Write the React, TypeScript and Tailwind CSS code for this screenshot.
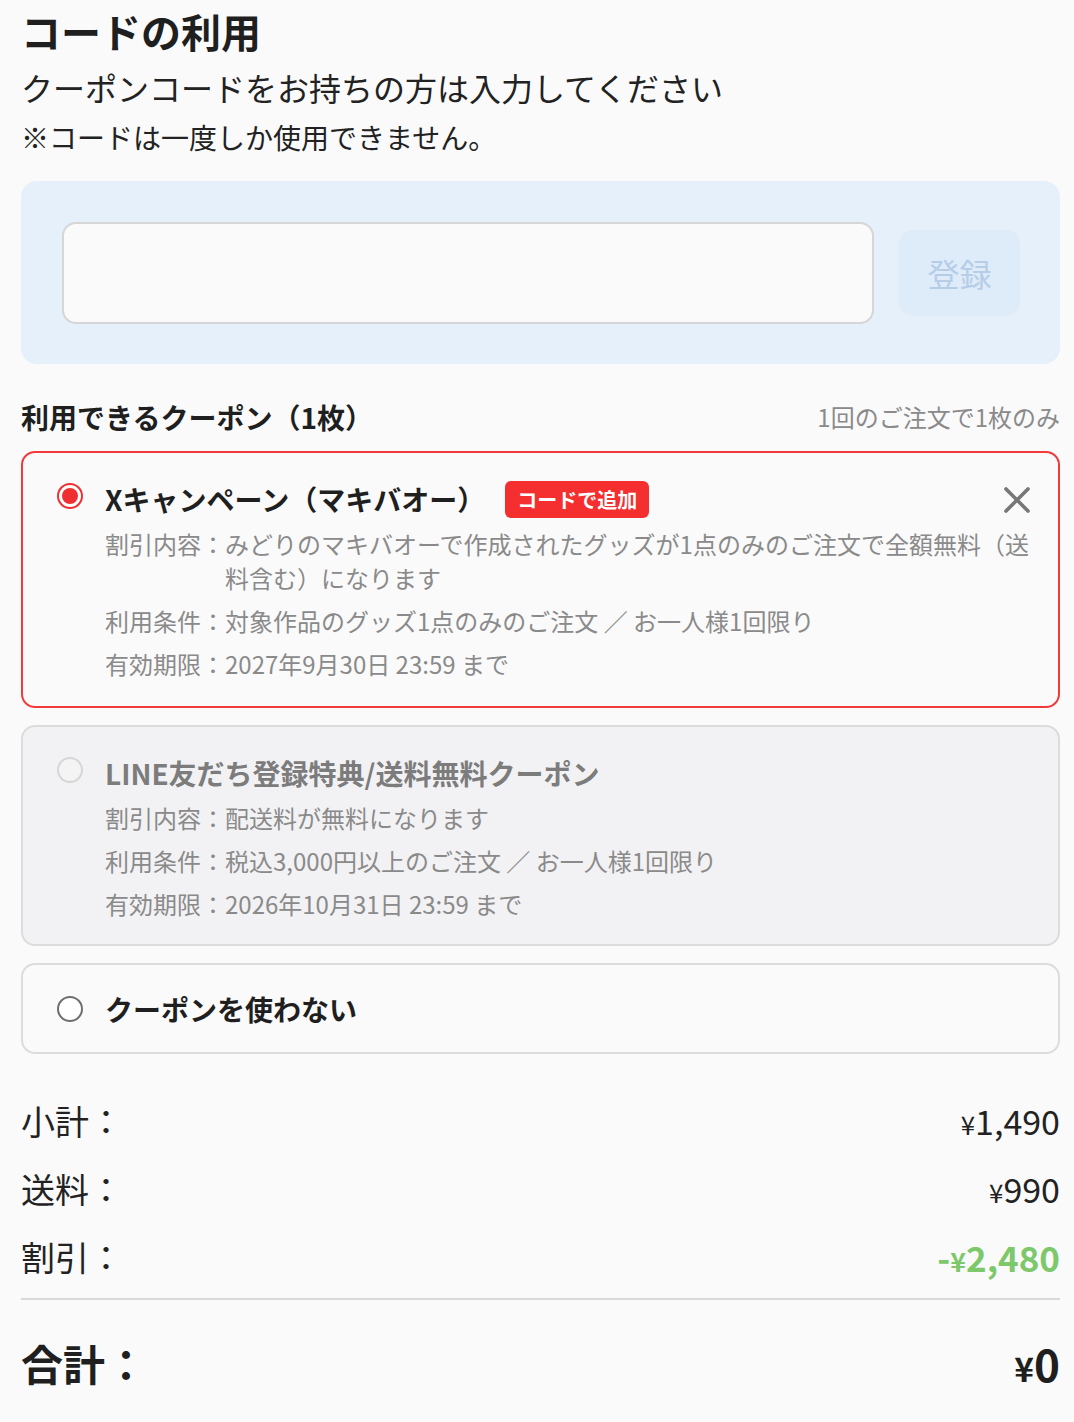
import { X } from 'lucide-react';

const FONT = "font-['Noto_Sans_CJK_JP','Noto_Sans',sans-serif]";

type Coupon = {
  title: string;
  discount: string;
  condition: string;
  expiry: string;
};

function Radio({ state }: { state: 'checked' | 'disabled' | 'empty' }) {
  if (state === 'checked') {
    return (
      <span className="mt-[3px] flex h-[26px] w-[26px] shrink-0 items-center justify-center rounded-full border-2 border-[#f03030] bg-white">
        <span className="h-[16px] w-[16px] rounded-full bg-[#f03030]" />
      </span>
    );
  }
  if (state === 'disabled') {
    return <span className="mt-[3px] h-[26px] w-[26px] shrink-0 rounded-full border-2 border-[#d6d6d6] bg-[#f4f4f4]" />;
  }
  return <span className="mt-[3px] h-[26px] w-[26px] shrink-0 rounded-full border-2 border-[#6f6f6f] bg-white" />;
}

function Detail({ label, text }: { label: string; text: string }) {
  return (
    <div className="flex text-[24px] leading-[34px] text-[#8a8a8a]">
      <span className="shrink-0">{label}：</span>
      <span>{text}</span>
    </div>
  );
}

function CouponCard({
  coupon,
  selected,
  disabled,
}: {
  coupon: Coupon;
  selected?: boolean;
  disabled?: boolean;
}) {
  const border = selected
    ? 'border-[#f23a3a] bg-[#fafafa] pb-[25px]'
    : 'border-[#dcdcdc] bg-[#f2f2f4] pb-[23px]';
  return (
    <div className={`relative rounded-[14px] border-2 ${border} pl-[34px] pr-[22px] pt-[27px]`}>
      <div className="flex items-start gap-[22px]">
        <Radio state={selected ? 'checked' : disabled ? 'disabled' : 'empty'} />
        <div className="flex-1">
          <div className="flex items-center gap-[20px]">
            <h3 className={`text-[28px] font-bold leading-[38px] ${disabled ? 'text-[#7c7c7c]' : 'text-[#1f1f1f]'}`}>
              {coupon.title}
            </h3>
            {selected && (
              <span className="rounded-[6px] bg-[#f52f2f] px-[12px] py-[4px] text-[20px] font-bold leading-[29px] text-white">
                コードで追加
              </span>
            )}
          </div>
          <div className="mt-[9px] flex flex-col gap-[9px]">
            <Detail label="割引内容" text={coupon.discount} />
            <Detail label="利用条件" text={coupon.condition} />
            <Detail label="有効期限" text={coupon.expiry} />
          </div>
        </div>
      </div>
      {selected && (
        <button className="absolute right-[19px] top-[25px] text-[#777777]">
          <X className="h-[44px] w-[44px]" strokeWidth={2} />
        </button>
      )}
    </div>
  );
}

const coupons: Coupon[] = [
  {
    title: 'Xキャンペーン（マキバオー）',
    discount: 'みどりのマキバオーで作成されたグッズが1点のみのご注文で全額無料（送料含む）になります',
    condition: '対象作品のグッズ1点のみのご注文 ／ お一人様1回限り',
    expiry: '2027年9月30日 23:59 まで',
  },
  {
    title: 'LINE友だち登録特典/送料無料クーポン',
    discount: '配送料が無料になります',
    condition: '税込3,000円以上のご注文 ／ お一人様1回限り',
    expiry: '2026年10月31日 23:59 まで',
  },
];

function Yen({ value }: { value: string }) {
  return (
    <>
      <span className="text-[0.76em]">¥</span>
      {value}
    </>
  );
}

function SummaryRow({ label, value, green, minus }: { label: string; value: string; green?: boolean; minus?: boolean }) {
  return (
    <div className="flex h-[48px] items-center justify-between">
      <span className="text-[34px] leading-none text-[#222]">{label}</span>
      <span className={green ? 'text-[35px] font-bold leading-none text-[#7ec86c]' : 'text-[34px] leading-none text-[#222]'}>
        {minus && '-'}
        <Yen value={value} />
      </span>
    </div>
  );
}

export default function App() {
  return (
    <div className={`min-h-[1422px] bg-[#fafafa] pl-[21px] pr-[14px] pt-[4px] ${FONT}`}>
      <h1 className="text-[40px] font-bold leading-[54px] text-[#1f1f1f]">コードの利用</h1>
      <p className="mt-[7px] text-[32px] leading-[44px] text-[#222]">クーポンコードをお持ちの方は入力してください</p>
      <p className="mt-[8px] text-[28px] leading-[40px] text-[#222]">※コードは一度しか使用できません。</p>

      {/* Code input */}
      <div className="mt-[24px] flex h-[183px] items-center gap-[25px] rounded-[16px] bg-[#e6f0fb] pl-[41px] pr-[40px]">
        <input
          className="h-[102px] flex-1 rounded-[14px] border-2 border-[#d6d6d6] bg-[#fafafa] px-4 text-[28px] outline-none"
          type="text"
        />
        <button className="h-[86px] w-[121px] rounded-[14px] bg-[#deebf9] text-[32px] text-[#b6cde8]">登録</button>
      </div>

      {/* Available coupons */}
      <div className="mt-[34px] flex items-center justify-between">
        <h2 className="text-[28px] font-bold leading-[38px] text-[#1f1f1f]">利用できるクーポン（1枚）</h2>
        <span className="text-[24px] text-[#8a8a8a]">1回のご注文で1枚のみ</span>
      </div>

      <div className="mt-[15px] flex flex-col gap-[17px]">
        <CouponCard coupon={coupons[0]} selected />
        <CouponCard coupon={coupons[1]} disabled />
        <div className="flex h-[91px] items-center gap-[22px] rounded-[14px] border-2 border-[#dcdcdc] bg-[#fafafa] pl-[34px]">
          <span className="h-[26px] w-[26px] shrink-0 rounded-full border-2 border-[#6f6f6f] bg-white" />
          <span className="text-[28px] font-bold text-[#1f1f1f]">クーポンを使わない</span>
        </div>
      </div>

      {/* Summary */}
      <div className="mt-[43px] flex flex-col gap-[20px]">
        <SummaryRow label="小計：" value="1,490" />
        <SummaryRow label="送料：" value="990" />
        <SummaryRow label="割引：" value="2,480" green minus />
      </div>
      <div className="mt-[17px] h-[2px] bg-[#d9d9d9]" />
      <div className="mt-[31px] flex h-[63px] items-center justify-between">
        <span className="text-[42px] font-bold leading-none text-[#1f1f1f]">合計：</span>
        <span className="text-[44px] font-bold leading-none text-[#1f1f1f]">
          <Yen value="0" />
        </span>
      </div>
    </div>
  );
}
